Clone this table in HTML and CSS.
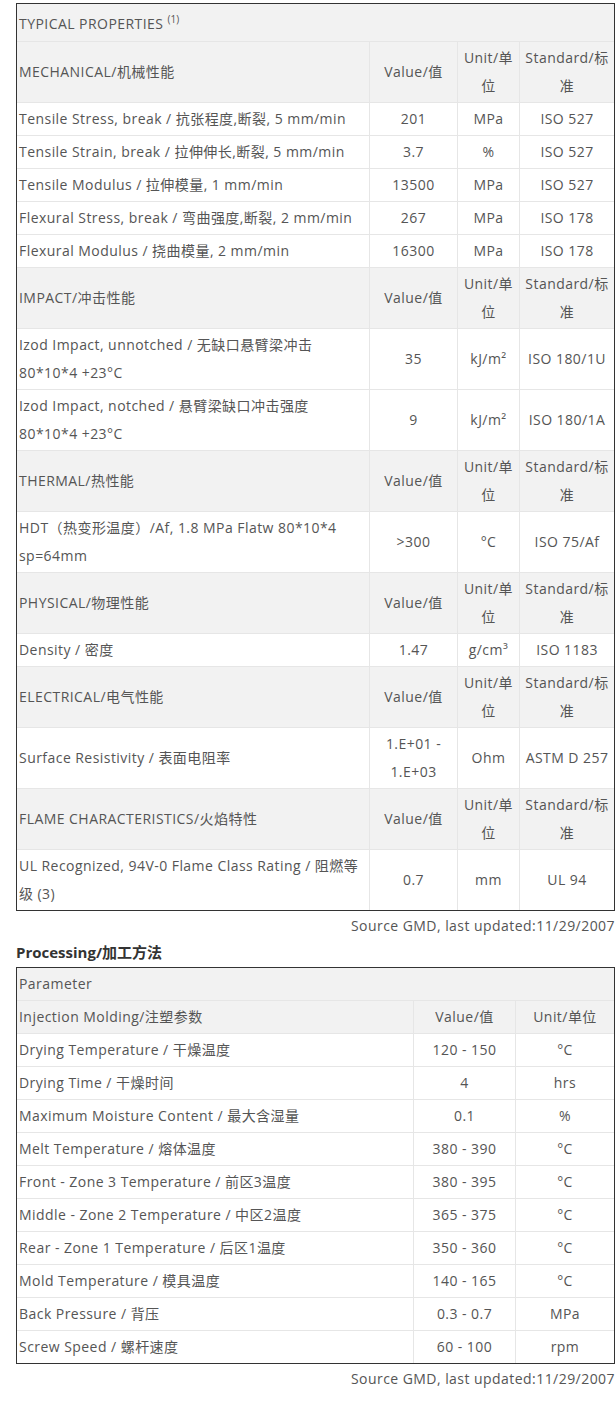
FILE: index.html
```html
<!DOCTYPE html>
<html>
<head>
<meta charset="utf-8">
<link rel="stylesheet" href="styles.css">
</head>
<body>
<div class="page">
  <table class="props">
    <colgroup><col class="c1"><col class="c2"><col class="c3"><col class="c4"></colgroup>
    <tr class="top"><td colspan="4">TYPICAL PROPERTIES <sup>(1)</sup></td></tr>
    <tr class="head"><td>MECHANICAL/机械性能</td><td class="ctr">Value/值</td><td class="ctr">Unit/单位</td><td class="ctr">Standard/标准</td></tr>
    <tr><td>Tensile Stress, break / 抗张程度,断裂, 5 mm/min</td><td class="ctr">201</td><td class="ctr">MPa</td><td class="ctr">ISO 527</td></tr>
    <tr><td>Tensile Strain, break / 拉伸伸长,断裂, 5 mm/min</td><td class="ctr">3.7</td><td class="ctr">%</td><td class="ctr">ISO 527</td></tr>
    <tr><td>Tensile Modulus / 拉伸模量, 1 mm/min</td><td class="ctr">13500</td><td class="ctr">MPa</td><td class="ctr">ISO 527</td></tr>
    <tr><td>Flexural Stress, break / 弯曲强度,断裂, 2 mm/min</td><td class="ctr">267</td><td class="ctr">MPa</td><td class="ctr">ISO 178</td></tr>
    <tr><td>Flexural Modulus / 挠曲模量, 2 mm/min</td><td class="ctr">16300</td><td class="ctr">MPa</td><td class="ctr">ISO 178</td></tr>
    <tr class="head"><td>IMPACT/冲击性能</td><td class="ctr">Value/值</td><td class="ctr">Unit/单位</td><td class="ctr">Standard/标准</td></tr>
    <tr><td>Izod Impact, unnotched / 无缺口悬臂梁冲击 80*10*4 +23°C</td><td class="ctr">35</td><td class="ctr">kJ/m²</td><td class="ctr">ISO 180/1U</td></tr>
    <tr><td>Izod Impact, notched / 悬臂梁缺口冲击强度 80*10*4 +23°C</td><td class="ctr">9</td><td class="ctr">kJ/m²</td><td class="ctr">ISO 180/1A</td></tr>
    <tr class="head"><td>THERMAL/热性能</td><td class="ctr">Value/值</td><td class="ctr">Unit/单位</td><td class="ctr">Standard/标准</td></tr>
    <tr><td>HDT（热变形温度）/Af, 1.8 MPa Flatw 80*10*4 sp=64mm</td><td class="ctr">&gt;300</td><td class="ctr">°C</td><td class="ctr">ISO 75/Af</td></tr>
    <tr class="head"><td>PHYSICAL/物理性能</td><td class="ctr">Value/值</td><td class="ctr">Unit/单位</td><td class="ctr">Standard/标准</td></tr>
    <tr><td>Density / 密度</td><td class="ctr">1.47</td><td class="ctr">g/cm³</td><td class="ctr">ISO 1183</td></tr>
    <tr class="head"><td>ELECTRICAL/电气性能</td><td class="ctr">Value/值</td><td class="ctr">Unit/单位</td><td class="ctr">Standard/标准</td></tr>
    <tr><td>Surface Resistivity / 表面电阻率</td><td class="ctr">1.E+01 - 1.E+03</td><td class="ctr">Ohm</td><td class="ctr">ASTM D 257</td></tr>
    <tr class="head"><td>FLAME CHARACTERISTICS/火焰特性</td><td class="ctr">Value/值</td><td class="ctr">Unit/单位</td><td class="ctr">Standard/标准</td></tr>
    <tr class="last"><td>UL Recognized, 94V-0 Flame Class Rating / 阻燃等级 (3)</td><td class="ctr">0.7</td><td class="ctr">mm</td><td class="ctr">UL 94</td></tr>
  </table>
  <p class="source">Source GMD, last updated:11/29/2007</p>

  <h3 class="title">Processing/加工方法</h3>
  <table class="proc">
    <colgroup><col class="p1"><col class="p2"><col class="p3"></colgroup>
    <tr class="head"><td colspan="3">Parameter</td></tr>
    <tr class="head"><td>Injection Molding/注塑参数</td><td class="ctr">Value/值</td><td class="ctr">Unit/单位</td></tr>
    <tr><td>Drying Temperature / 干燥温度</td><td class="ctr">120 - 150</td><td class="ctr">°C</td></tr>
    <tr><td>Drying Time / 干燥时间</td><td class="ctr">4</td><td class="ctr">hrs</td></tr>
    <tr><td>Maximum Moisture Content / 最大含湿量</td><td class="ctr">0.1</td><td class="ctr">%</td></tr>
    <tr><td>Melt Temperature / 熔体温度</td><td class="ctr">380 - 390</td><td class="ctr">°C</td></tr>
    <tr><td>Front - Zone 3 Temperature / 前区3温度</td><td class="ctr">380 - 395</td><td class="ctr">°C</td></tr>
    <tr><td>Middle - Zone 2 Temperature / 中区2温度</td><td class="ctr">365 - 375</td><td class="ctr">°C</td></tr>
    <tr><td>Rear - Zone 1 Temperature / 后区1温度</td><td class="ctr">350 - 360</td><td class="ctr">°C</td></tr>
    <tr><td>Mold Temperature / 模具温度</td><td class="ctr">140 - 165</td><td class="ctr">°C</td></tr>
    <tr><td>Back Pressure / 背压</td><td class="ctr">0.3 - 0.7</td><td class="ctr">MPa</td></tr>
    <tr class="last"><td>Screw Speed / 螺杆速度</td><td class="ctr">60 - 100</td><td class="ctr">rpm</td></tr>
  </table>
  <p class="source">Source GMD, last updated:11/29/2007</p>
</div>
</body>
</html>
```

FILE: styles.css
```css
html, body {
  margin: 0;
  padding: 0;
  background: #fff;
}
.page {
  padding: 3px 0 0 16px;
  width: 599px;
  font-family: "Open Sans", "Noto Sans CJK SC", sans-serif;
  font-size: 14px;
  letter-spacing: 0.45px;
  color: #555;
}
table {
  width: 599px;
  table-layout: fixed;
  border-collapse: separate;
  border-spacing: 0;
  border: 1px solid #333;
}
td {
  border-right: 1px solid #e6e6e6;
  border-bottom: 1px solid #e6e6e6;
  padding: 2px 2px;
  line-height: 28px;
  vertical-align: middle;
  text-align: left;
}
td:last-child { border-right: 0; }
.last td { border-bottom: 0; }
.ctr { text-align: center; }
.top td, .head td { background: #f2f2f2; }
.top td { padding: 6px 2px 3px; }
sup {
  font-size: 10px;
  vertical-align: 6px;
  line-height: 0;
  letter-spacing: 0;
}
.c1 { width: 353px; }
.c2 { width: 88px; }
.c3 { width: 62px; }
.c4 { width: 94px; }
.p1 { width: 397px; }
.p2 { width: 102px; }
.p3 { width: 98px; }
.source {
  margin: 1px 0 0;
  text-align: right;
  line-height: 28px;
}
.title {
  margin: 2px 0 5px;
  font-size: 15px;
  letter-spacing: 0;
  font-weight: bold;
  color: #333;
  line-height: 20px;
}
```
